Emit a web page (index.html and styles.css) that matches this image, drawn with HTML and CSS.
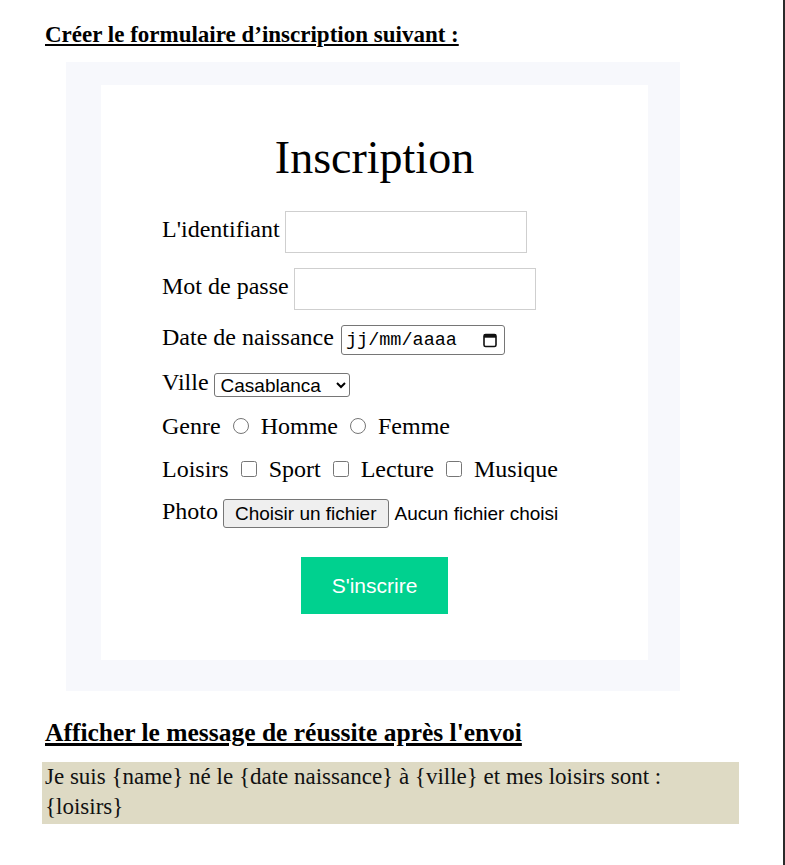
FILE: index.html
```html
<!DOCTYPE html>
<html lang="fr">
<head>
<meta charset="utf-8">
<title>Inscription</title>
<link rel="stylesheet" href="styles.css">
</head>
<body>
<div class="page">
  <h2 class="task">Créer le formulaire d’inscription suivant :</h2>
  <div class="frame">
    <form class="card">
      <h1 class="title">Inscription</h1>
      <div class="rows">
        <div class="row">
          <label class="t" for="ident">L'identifiant</label>
          <input class="field" id="ident" type="text">
        </div>
        <div class="row">
          <label class="t" for="pass">Mot de passe</label>
          <input class="field" id="pass" type="password">
        </div>
        <div class="row">
          <span class="t">Date de naissance</span>
          <div class="date">
            <span class="date-text">jj/mm/aaaa</span>
            <svg class="cal" width="16" height="16" viewBox="0 0 16 16" aria-hidden="true">
              <rect x="2" y="2.5" width="12" height="12" rx="1.6" fill="none" stroke="#111" stroke-width="1.6"/>
              <rect x="2" y="2.5" width="12" height="3.2" fill="#111"/>
            </svg>
          </div>
        </div>
        <div class="row row-down">
          <label class="t" for="ville">Ville</label>
          <select class="select" id="ville">
            <option>Casablanca</option>
            <option>Rabat</option>
            <option>Marrakech</option>
          </select>
        </div>
        <div class="row choices row-down">
          <span class="t">Genre</span>
          <input class="tick" type="radio" name="genre">
          <span class="t">Homme</span>
          <input class="tick" type="radio" name="genre">
          <span class="t">Femme</span>
        </div>
        <div class="row choices">
          <span class="t">Loisirs</span>
          <input class="tick" type="checkbox">
          <span class="t">Sport</span>
          <input class="tick" type="checkbox">
          <span class="t">Lecture</span>
          <input class="tick" type="checkbox">
          <span class="t">Musique</span>
        </div>
        <div class="row row-up">
          <span class="t">Photo</span>
          <button class="file-btn" type="button">Choisir un fichier</button>
          <span class="file-name">Aucun fichier choisi</span>
        </div>
      </div>
      <button class="submit" type="button">S'inscrire</button>
    </form>
  </div>
  <h2 class="task task-2">Afficher le message de réussite après l'envoi</h2>
  <p class="message">Je suis {name} né le {date naissance} à {ville} et mes loisirs sont : {loisirs}</p>
</div>
</body>
</html>
```
FILE: styles.css
```css
html, body {
  margin: 0;
  padding: 0;
  background: #ffffff;
}

.page {
  width: 783px;
  min-height: 865px;
  border-right: 2px solid #2b2b2b;
  display: flex;
  flex-direction: column;
  align-items: flex-start;
  font-family: "Liberation Serif", "Times New Roman", serif;
  color: #000;
}

.task {
  margin: 22px 0 0 45px;
  font-size: 23px;
  font-weight: 700;
  line-height: 26px;
  text-decoration: underline;
  text-decoration-thickness: 2px;
  text-underline-offset: 2px;
  white-space: nowrap;
}

.task-2 {
  margin-top: 27px;
  font-size: 25.5px;
  line-height: 29px;
  text-decoration-thickness: 2.5px;
}

.frame {
  margin: 14px 0 0 66px;
  width: 614px;
  box-sizing: border-box;
  padding: 23px 32px 31px 35px;
  background: #f7f8fc;
}

.card {
  background: #ffffff;
  margin: 0;
  padding: 0 0 46px 0;
  display: flex;
  flex-direction: column;
}

.title {
  margin: 47px 0 0 0;
  text-align: center;
  font-size: 46px;
  font-weight: 400;
  line-height: 52px;
}

.rows {
  margin: 27px 0 0 61px;
  display: flex;
  flex-direction: column;
  gap: 15px;
}

.row {
  display: flex;
  align-items: center;
  gap: 5px;
  min-height: 28px;
}

.row-down {
  margin-top: 1px;
}

.row-up {
  margin-top: -2px;
}

.row.choices {
  gap: 12px;
}

.t {
  font-size: 24px;
  line-height: 22px;
  padding-bottom: 6px;
  white-space: nowrap;
}

.field {
  width: 242px;
  height: 42px;
  box-sizing: border-box;
  border: 1px solid #cfcfcf;
  border-radius: 0;
  padding: 0 8px;
  font-family: "Liberation Sans", Arial, sans-serif;
  font-size: 16px;
  margin: 0;
}

.date {
  width: 164px;
  height: 30px;
  box-sizing: border-box;
  border: 1px solid #767676;
  border-radius: 3px;
  padding: 0 6px 0 4px;
  display: flex;
  align-items: center;
  justify-content: space-between;
  margin-left: 2px;
}

.date-text {
  font-family: "Liberation Mono", "Courier New", monospace;
  font-size: 18.5px;
  line-height: 21px;
  color: #000;
}

.cal {
  display: block;
}

.select {
  width: 136px;
  height: 24px;
  box-sizing: border-box;
  margin: 0;
  padding: 0 2px;
  font-family: "Liberation Sans", Arial, sans-serif;
  font-size: 19px;
  color: #000;
  background: #fff;
  border: 1px solid #767676;
  border-radius: 3px;
}

.tick {
  width: 16px;
  height: 16px;
  margin: 0 0 6px 0;
  flex: none;
}

.file-btn {
  height: 29px;
  box-sizing: border-box;
  margin: 0;
  padding: 0 11px;
  font-family: "Liberation Sans", Arial, sans-serif;
  font-size: 19px;
  color: #000;
  background: #efefef;
  border: 1px solid #767676;
  border-radius: 3px;
}

.file-name {
  margin-left: 1px;
  font-family: "Liberation Sans", Arial, sans-serif;
  font-size: 19px;
  white-space: nowrap;
}

.submit {
  align-self: center;
  margin: 29px 0 0 0;
  width: 147px;
  height: 57px;
  border: none;
  background: #00d18f;
  color: #ffffff;
  font-family: "Liberation Sans", Arial, sans-serif;
  font-size: 21px;
  padding: 0;
}

.message {
  margin: 15px 0 0 42px;
  width: 697px;
  box-sizing: border-box;
  padding: 0 20px 2px 3px;
  background: #dedac4;
  font-size: 23px;
  line-height: 30px;
  color: #111;
}
```
